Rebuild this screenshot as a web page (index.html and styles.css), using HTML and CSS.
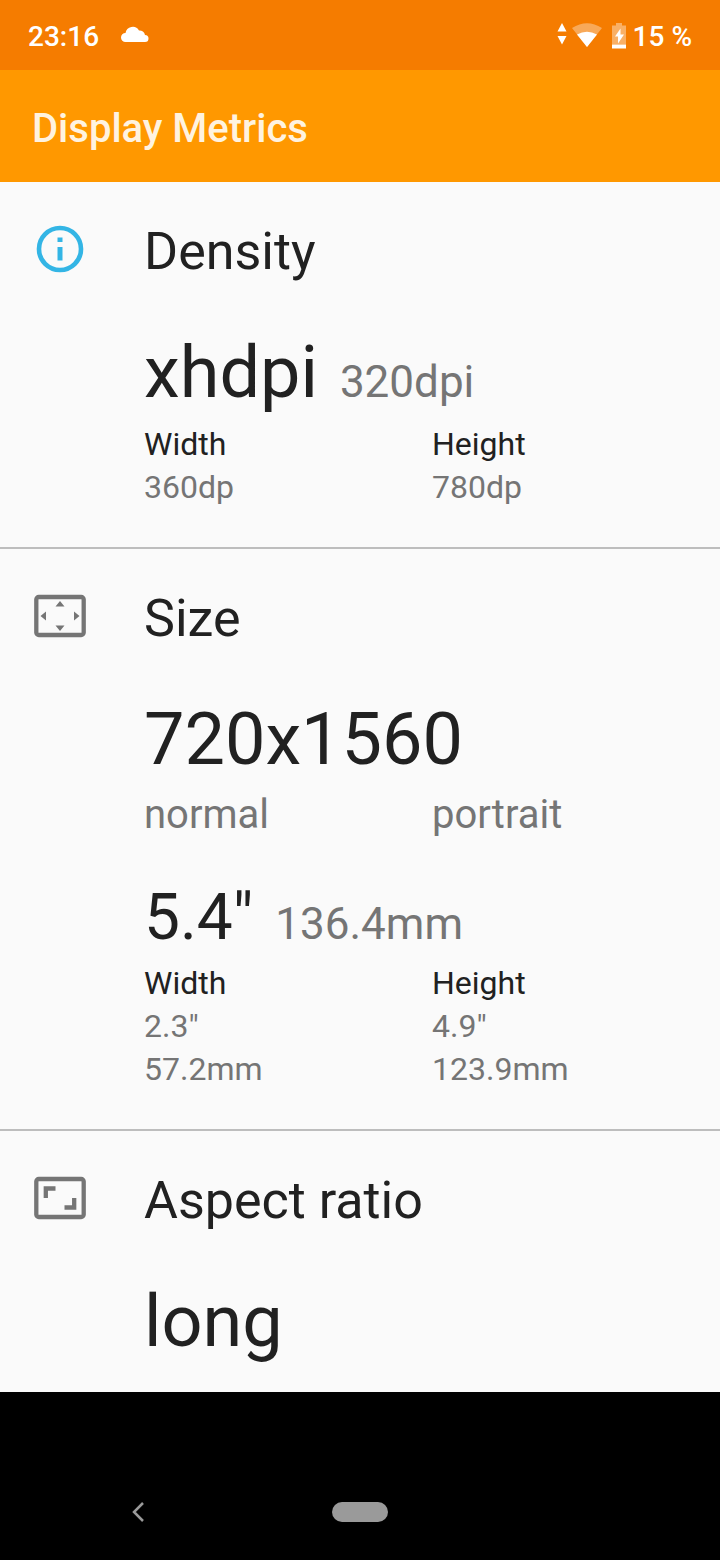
FILE: index.html
```html
<!DOCTYPE html>
<html lang="en">
<head>
<meta charset="utf-8">
<meta name="viewport" content="width=device-width, initial-scale=1">
<title>Display Metrics</title>
<link rel="stylesheet" href="styles.css">
</head>
<body>
<div class="screen">
  <div class="status-bar">
    <span>23:16</span>
    <svg class="cloud" width="28" height="20" viewBox="0 0 28 20" aria-hidden="true"><path d="M4.500 16a4.500 4.500 0 0 1 0-9A7.300 7.300 0 0 1 18 4.500 5.500 5.500 0 0 1 24 9a3.500 3.500 0 0 1 0 7z" fill="#fff"/></svg>
    <span class="spacer"></span>
    <svg class="traffic" width="10" height="24" viewBox="0 0 10 24" aria-hidden="true"><path d="M5 1l4.500 8.500h-9zM5 22.500l4.500-8.500h-9z" fill="#fff"/></svg>
    <svg class="wifi" width="30" height="26" viewBox="0 0 30 26" aria-hidden="true"><path d="M0 5Q15-4.500 30 5L15 24z" fill="#fff" opacity=".35"/><path d="M5 11.500Q15 6 25 11.500L15 24z" fill="#fff"/></svg>
    <svg class="battery" width="14" height="26" viewBox="0 0 14 26" aria-hidden="true"><path d="M0 2.500h4V0h6v2.500h4V21.500H0z" fill="#fff" opacity=".4"/><path d="M0 21.500h14v4H0zM8.500 5.500v6H12L6 20.500v-7H3z" fill="#fff"/></svg>
    <span>15 %</span>
  </div>
  <header class="app-bar"><h1>Display Metrics</h1></header>
  <main class="content">
    <section class="card">
      <svg class="icon" width="56" height="56" viewBox="0 0 56 56" aria-hidden="true"><path d="M25.500 26h5v13.500h-5zM25.500 16.500h5v4.500h-5z" fill="#33b5e5"/><circle cx="28" cy="28" r="21" fill="none" stroke="#33b5e5" stroke-width="4.600"/></svg>
      <div class="body">
        <h2>Density</h2>
        <p class="value"><span class="big">xhdpi</span> <span class="sub">320dpi</span></p>
        <dl class="grid"><div><dt>Width</dt><dd>360dp</dd></div><div><dt>Height</dt><dd>780dp</dd></div></dl>
      </div>
    </section>
    <section class="card">
      <svg class="icon" width="56" height="56" viewBox="0 0 56 56" aria-hidden="true"><rect x="4.300" y="9" width="47.400" height="38" rx="2.500" fill="none" stroke="#757575" stroke-width="4.300"/><path d="M23.500 18.500L28 13l4.500 5.500zM23.500 37.500L28 43l4.500-5.500zM14 23.500L8.500 28l5.500 4.500zM42 23.500l5.500 4.500-5.500 4.500z" fill="#757575"/></svg>
      <div class="body">
        <h2>Size</h2>
        <p class="value"><span class="big">720x1560</span></p>
        <div class="grid kinds"><p>normal</p><p>portrait</p></div>
        <p class="value diagonal"><span class="mid">5.4"</span> <span class="sub">136.4mm</span></p>
        <dl class="grid"><div><dt>Width</dt><dd>2.3"</dd><dd>57.2mm</dd></div><div><dt>Height</dt><dd>4.9"</dd><dd>123.9mm</dd></div></dl>
      </div>
    </section>
    <section class="card">
      <svg class="icon" width="56" height="56" viewBox="0 0 56 56" aria-hidden="true"><rect x="4.300" y="9" width="47.400" height="38" rx="2.500" fill="none" stroke="#757575" stroke-width="4.300"/><path d="M13.800 28V18.500h9.700M42.200 28v9.500h-9.700" fill="none" stroke="#757575" stroke-width="4.300"/></svg>
      <div class="body">
        <h2>Aspect ratio</h2>
        <p class="value"><span class="big">long</span></p>
      </div>
    </section>
  </main>
  <nav class="nav-bar">
    <button class="back" aria-label="Back"><svg width="14" height="22" viewBox="0 0 14 22" aria-hidden="true"><path d="M11 2L2 11l9 9" fill="none" stroke="#9a9a9a" stroke-width="2.500"/></svg></button>
    <button class="home" aria-label="Home"></button>
    <span></span>
  </nav>
</div>
</body>
</html>
```
FILE: styles.css
```css
* { box-sizing: border-box; }
body, h1, h2, p, dl, dd { margin: 0; }
body { font-family: Roboto, sans-serif; color: #212121; background: #000; }
h1, h2 { font-weight: 400; }
button { border: 0; padding: 0; background: none; }
.screen { min-height: 100vh; display: flex; flex-direction: column; }
.status-bar { display: flex; align-items: center; height: 70px; padding: 2px 28px 0; background: #f57c00; color: #fff; font-size: 28px; font-weight: 500; }
.cloud { margin-left: 22px; }
.spacer { flex: 1; }
.traffic { margin-bottom: 4px; }
.wifi { margin: 0 10px 0 5px; }
.battery { margin-right: 7px; }
.app-bar { padding: 35px 32px 29px; background: #ff9800; color: #fff3e0; }
.app-bar h1 { font-size: 40px; line-height: 48px; font-weight: 500; }
.content { flex: 1; background: #fafafa; }
.card { display: flex; gap: 56px; padding: 38px 0 38px 32px; border-bottom: 2px solid #bdbdbd; }
.card:last-child { border: 0; padding-bottom: 20px; }
.icon { flex: none; margin-top: 1px; }
.body { flex: 1; }
h2 { font-size: 52px; line-height: 64px; }
.value { margin-top: 58px; line-height: 62px; white-space: nowrap; }
.big { font-size: 72px; }
.mid { font-size: 64px; }
.sub { font-size: 44px; color: #757575; margin-left: 18px; }
.grid { display: grid; grid-template-columns: 1fr 1fr; font-size: 32px; line-height: 43px; }
dd { color: #757575; }
.kinds { font-size: 40px; line-height: 50px; color: #757575; }
.diagonal { margin-top: 50px; line-height: 56px; }
.nav-bar { flex: none; display: grid; grid-template-columns: 1fr auto 1fr; align-items: center; height: 168px; padding-top: 72px; background: #000; }
.back { display: grid; place-items: center; justify-self: center; width: 48px; height: 48px; margin-right: 54px; }
.home { width: 56px; height: 20px; border-radius: 10px; background: #9a9a9a; }
```
